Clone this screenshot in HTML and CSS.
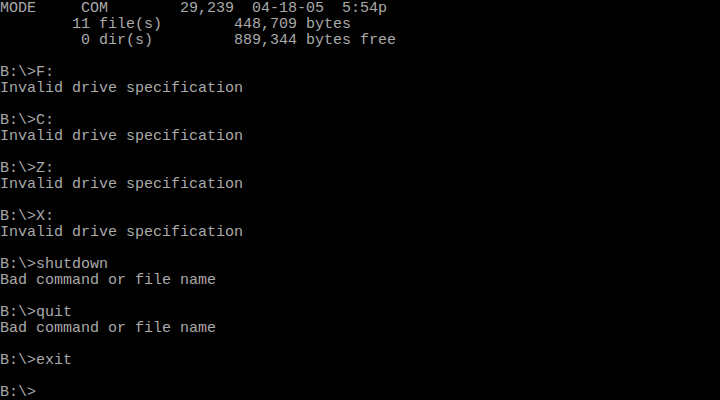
FILE: index.html
```html
<!DOCTYPE html>
<html lang="en">
<head>
  <meta charset="UTF-8">
  <title>DOS</title>
  <link rel="stylesheet" href="styles.css">
</head>
<body>
  <pre class="screen">MODE     COM        29,239  04-18-05  5:54p
        11 file(s)        448,709 bytes
         0 dir(s)         889,344 bytes free

B:\&gt;F:
Invalid drive specification

B:\&gt;C:
Invalid drive specification

B:\&gt;Z:
Invalid drive specification

B:\&gt;X:
Invalid drive specification

B:\&gt;shutdown
Bad command or file name

B:\&gt;quit
Bad command or file name

B:\&gt;exit

B:\&gt;</pre>
</body>
</html>
```

FILE: styles.css
```css
html, body {
  margin: 0;
  padding: 0;
  background: #000000;
  height: 100%;
  overflow: hidden;
}

.screen {
  margin: 0;
  padding-top: 1px;
  width: 720px;
  height: 399px;
  font-family: 'Liberation Mono', 'DejaVu Sans Mono', monospace;
  font-size: 15px;
  line-height: 16px;
  color: #aaaaaa;
  white-space: pre;
}
```
